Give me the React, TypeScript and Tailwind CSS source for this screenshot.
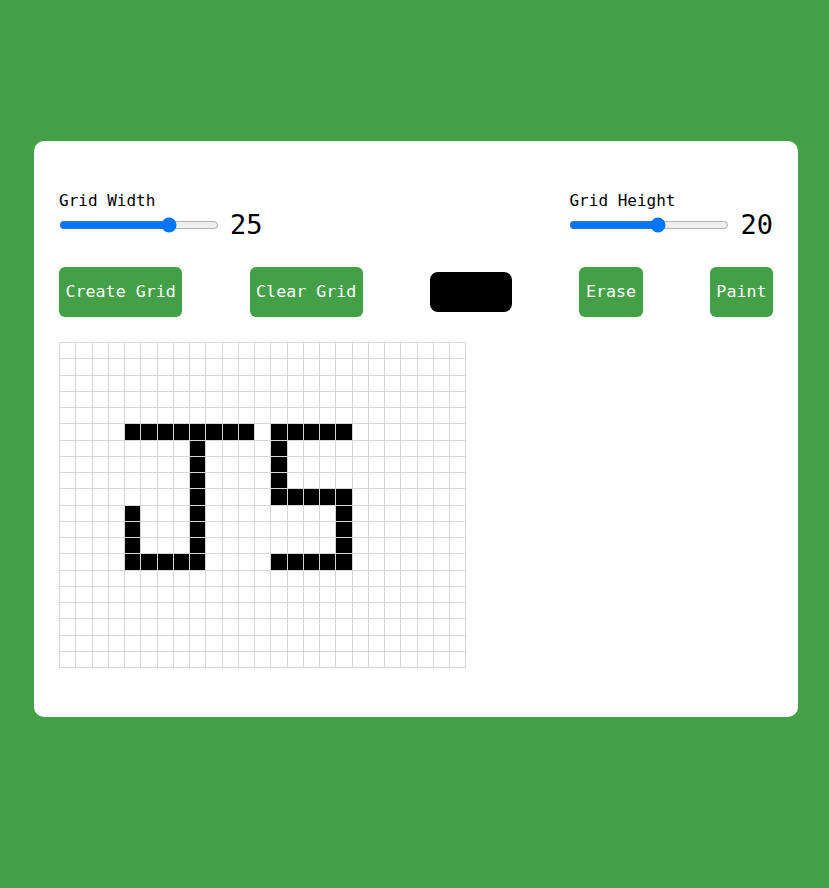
import { useState } from "react";

const COLS = 25;
const ROWS = 20;

// cells that spell "JS" in the starting picture
const START: [number, number][] = [
  // J
  [5, 4], [5, 5], [5, 6], [5, 7], [5, 8], [5, 9], [5, 10], [5, 11],
  [6, 8], [7, 8], [8, 8], [9, 8], [10, 8], [11, 8], [12, 8],
  [13, 4], [13, 5], [13, 6], [13, 7], [13, 8],
  [10, 4], [11, 4], [12, 4],
  // S
  [5, 13], [5, 14], [5, 15], [5, 16], [5, 17],
  [6, 13], [7, 13], [8, 13],
  [9, 13], [9, 14], [9, 15], [9, 16], [9, 17],
  [10, 17], [11, 17], [12, 17],
  [13, 13], [13, 14], [13, 15], [13, 16], [13, 17],
];

function makeGrid(rows: number, cols: number, fill = false) {
  const g: string[][] = [];
  for (let r = 0; r < rows; r++) {
    g.push(new Array(cols).fill(""));
  }
  if (fill) {
    START.forEach(([r, c]) => {
      if (r < rows && c < cols) g[r][c] = "#000000";
    });
  }
  return g;
}

export default function App() {
  const [width, setWidth] = useState(COLS);
  const [height, setHeight] = useState(ROWS);
  const [grid, setGrid] = useState<string[][]>(() => makeGrid(ROWS, COLS, true));
  const [color, setColor] = useState("#000000");
  const [erase, setErase] = useState(false);

  const paintCell = (r: number, c: number) => {
    setGrid((g) =>
      g.map((row, ri) =>
        ri === r ? row.map((v, ci) => (ci === c ? (erase ? "" : color) : v)) : row
      )
    );
  };

  const cols = grid[0]?.length ?? 0;

  return (
    <div className="min-h-screen bg-[#43a047] pt-[141px] pl-[34px] pb-[171px] font-['DejaVu_Sans_Mono',monospace] leading-[normal]">
      <div className="w-[764px] rounded-[10px] bg-white px-[25px] pt-[50px] pb-[49px]">
        <div className="flex justify-between">
          <div className="flex flex-col">
            <label className="text-[16px] leading-[normal] text-black">Grid Width</label>
            <div className="flex items-center gap-[11px]">
              <input
                type="range"
                min={1}
                max={35}
                value={width}
                onChange={(e) => setWidth(Number(e.target.value))}
                className="m-0 w-[160px]"
              />
              <span className="text-[27px] leading-[30px] text-black">{width}</span>
            </div>
          </div>
          <div className="flex flex-col">
            <label className="text-[16px] leading-[normal] text-black">Grid Height</label>
            <div className="flex items-center gap-[11px]">
              <input
                type="range"
                min={1}
                max={35}
                value={height}
                onChange={(e) => setHeight(Number(e.target.value))}
                className="m-0 w-[160px]"
              />
              <span className="text-[27px] leading-[30px] text-black">{height}</span>
            </div>
          </div>
        </div>

        <div className="mt-[27px] flex items-center justify-between">
          <button
            onClick={() => setGrid(makeGrid(height, width))}
            className="h-[50px] rounded-[6px] bg-[#43a047] px-[6.5px] pb-[2px] text-[16.67px] text-white"
          >
            Create Grid
          </button>
          <button
            onClick={() => setGrid(makeGrid(grid.length, cols))}
            className="h-[50px] rounded-[6px] bg-[#43a047] px-[6.5px] pb-[2px] text-[16.67px] text-white"
          >
            Clear Grid
          </button>
          <label
            className="block h-[40px] w-[82px] cursor-pointer rounded-[8px]"
            style={{ backgroundColor: color }}
          >
            <input
              type="color"
              value={color}
              onChange={(e) => setColor(e.target.value)}
              className="hidden"
            />
          </label>
          <button
            onClick={() => setErase(true)}
            className="h-[50px] rounded-[6px] bg-[#43a047] px-[6.5px] pb-[2px] text-[16.67px] text-white"
          >
            Erase
          </button>
          <button
            onClick={() => setErase(false)}
            className="h-[50px] rounded-[6px] bg-[#43a047] px-[6.5px] pb-[2px] text-[16.67px] text-white"
          >
            Paint
          </button>
        </div>

        <div className="mt-[25px] flex">
          <div
            className="grid border-t border-l border-[#d6d6d6]"
            style={{ gridTemplateColumns: `repeat(${cols}, 16.25px)` }}
          >
            {grid.map((row, r) =>
              row.map((v, c) => (
                <div
                  key={`${r}-${c}`}
                  onMouseDown={() => paintCell(r, c)}
                  className="h-[16.25px] w-[16.25px] border-r border-b border-[#d6d6d6]"
                  style={{ backgroundColor: v || "#ffffff" }}
                />
              ))
            )}
          </div>
        </div>
      </div>
    </div>
  );
}
